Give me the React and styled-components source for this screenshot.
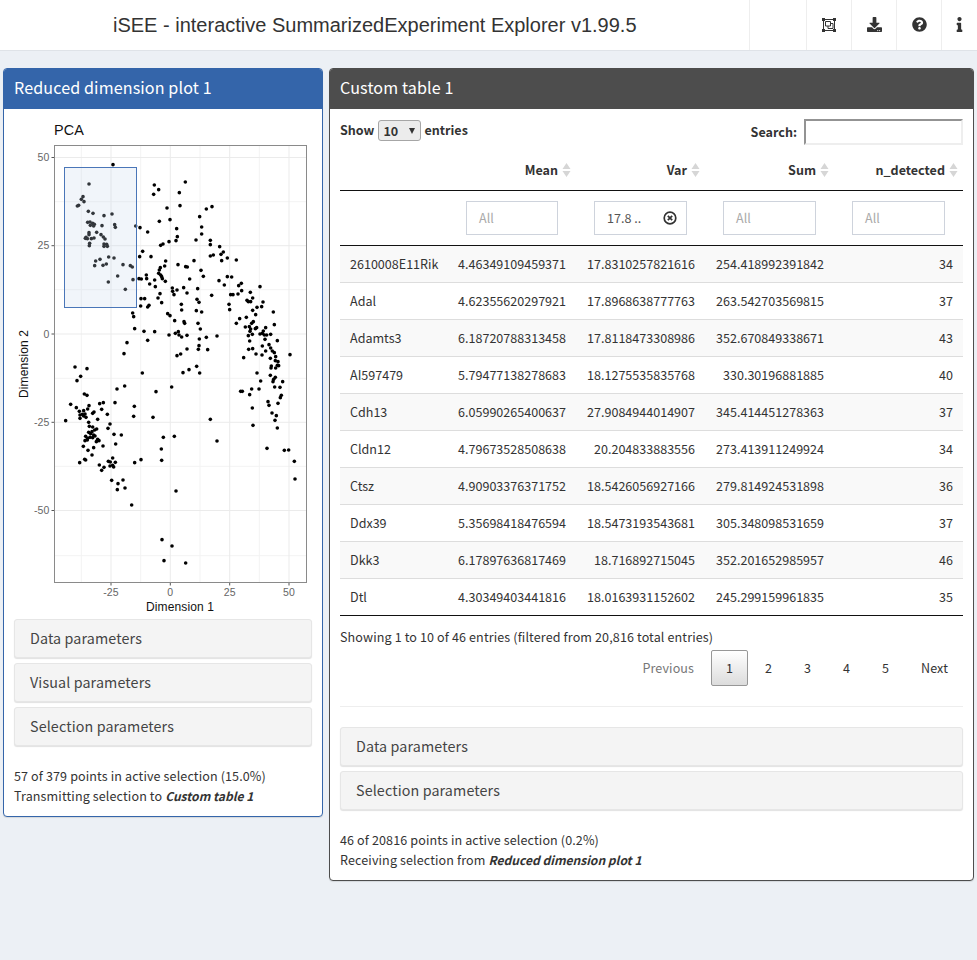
import React from 'react'
import styled, { createGlobalStyle } from 'styled-components'
import { FaDownload, FaQuestionCircle, FaInfo } from 'react-icons/fa'

const BODY_FONT = '"Noto Sans CJK SC", "Noto Sans", sans-serif'
const PLOT_FONT = '"Liberation Sans", Arial, sans-serif'

const GlobalStyle = createGlobalStyle`
  html, body { margin: 0; padding: 0; background: #ecf0f5; }
  body { font-family: ${BODY_FONT}; font-size: 12.55px; line-height: 20px; letter-spacing: 0.12px; color: #333; }
  * { box-sizing: border-box; }
`

const Page = styled.div`
  min-height: 960px;
  background: #ecf0f5;
`

const Navbar = styled.header`
  display: flex;
  align-items: stretch;
  height: 51px;
  background: #fff;
  border-bottom: 1px solid #dfe3e8;
`

const Brand = styled.div`
  flex: 1;
  padding-left: 113px;
  font-family: ${PLOT_FONT};
  font-size: 20px;
  line-height: 50px;
  letter-spacing: 0;
  color: #333;
`

const NavItem = styled.div`
  display: flex;
  align-items: center;
  justify-content: center;
  width: ${p => p.$w}px;
  padding-bottom: 1px;
  border-left: 1px solid #eee;
  color: #333;
  font-size: 15px;
`

const Columns = styled.main`
  display: grid;
  grid-template-columns: 320px 645px;
  gap: 6px;
  align-items: start;
  padding: 17px 3px 0;
`

const Panel = styled.section`
  background: #fff;
  border: 1px solid ${p => p.$color};
  border-radius: 4px;
  overflow: hidden;
  box-shadow: 0 1px 1px rgba(0, 0, 0, 0.1);
`

const PanelTitle = styled.h3`
  margin: -1px -1px 0;
  height: 41px;
  padding-left: 11px;
  background: ${p => p.$color};
  color: #fff;
  font-size: 16.1px;
  font-weight: 400;
  line-height: 38px;
`

const PlotBody = styled.div`
  padding: 1px 10px 10px;
`

const TableBody = styled.div`
  padding: 0 10px 10px;
`

const PlotSvg = styled.svg`
  display: block;
  margin-bottom: 4px;
`

const Collapse = styled.div`
  height: 39px;
  margin-bottom: 5px;
  padding-left: 15px;
  background: #f4f4f4;
  border: 1px solid #e6e6e6;
  border-radius: 3px;
  box-shadow: 0 1px 1px rgba(0, 0, 0, 0.12);
  font-size: 14.3px;
  line-height: 35px;
  color: #444;
`

const Status = styled.div`
  margin-top: 20px;
  b { font-size: 12.05px; font-style: italic; font-weight: 700; letter-spacing: 0; }
`

const TableTop = styled.div`
  display: flex;
  justify-content: space-between;
  align-items: flex-start;
  height: 36px;
  padding-top: 10px;
  letter-spacing: 0;
`

const ShowLabel = styled.label`
  display: flex;
  align-items: center;
  gap: 3px;
  height: 22px;
  font-weight: 700;
`

const SelectWrap = styled.span`
  position: relative;
  display: block;
  width: 43px;
  height: 21px;
  margin-left: 1px;
  &::after {
    content: '';
    position: absolute;
    right: 6px;
    top: 8px;
    border-style: solid;
    border-width: 6px 3.5px 0;
    border-color: #333 transparent transparent;
    pointer-events: none;
  }
`

const LengthSelect = styled.select`
  appearance: none;
  display: block;
  width: 100%;
  height: 100%;
  padding: 0 0 0 4px;
  font-family: ${BODY_FONT};
  font-size: 12.55px;
  font-weight: 700;
  color: #333;
  background: #ececec;
  border: 1px solid #a6a6a6;
  border-radius: 3px;
`

const SearchLabel = styled.label`
  display: flex;
  align-items: center;
  gap: 7px;
  height: 26px;
  font-weight: 700;
`

const SearchInput = styled.input`
  width: 159px;
  height: 26px;
  padding: 1px 2px;
  background: #fff;
  border-style: solid;
  border-width: 2px;
  border-color: #939393 #eee #eee #939393;
`

const Table = styled.table`
  width: 623px;
  margin-top: 10px;
  table-layout: fixed;
  border-collapse: separate;
  border-spacing: 0;
  letter-spacing: 0;
`

const HeadCell = styled.th`
  position: relative;
  height: 36px;
  padding: 0 18px 6px 10px;
  text-align: right;
  font-weight: 700;
  border-bottom: 1px solid #111;
`

const SortIcon = styled.svg`
  position: absolute;
  right: 5px;
  top: 7px;
`

const FilterCell = styled.td`
  height: 55px;
  padding: 0 18px;
  border-bottom: 1px solid #111;
`

const FilterBox = styled.div`
  display: flex;
  align-items: center;
  justify-content: space-between;
  height: 34px;
  padding: 0 9px 0 12px;
  background: #fff;
  border: 1px solid #ced3dc;
  color: ${p => (p.$filled ? '#555' : '#aaa')};
`

const Row = styled.tr`
  background: ${p => (p.$odd ? '#f9f9f9' : '#fff')};
`

const Cell = styled.td`
  height: 37px;
  padding: 0 10px;
  text-align: ${p => (p.$left ? 'left' : 'right')};
  white-space: nowrap;
  border-bottom: 1px solid ${p => (p.$last ? '#111' : '#ddd')};
`

const Info = styled.div`
  padding-top: 11px;
`

const Pager = styled.nav`
  display: flex;
  justify-content: flex-end;
  gap: 2px;
  margin-top: 3px;
`

const PageButton = styled.span`
  height: 36px;
  padding: 7px 14px;
  border: 1px solid ${p => (p.$current ? '#979797' : 'transparent')};
  border-radius: 2px;
  letter-spacing: ${p => (p.$digit ? 0 : '0.12px')};
  color: ${p => (p.$muted ? '#777' : '#333')};
  background: ${p => (p.$current ? 'linear-gradient(to bottom, #fff 0%, #dcdcdc 100%)' : 'none')};
`

const Rule = styled.hr`
  height: 1px;
  margin: 20px 0;
  background: #eee;
  border: 0;
`

/* positions read off the reference: top half then bottom half, in 3x crop px */
const upper = [[339,314],[267,372],[249,410],[244,418],[252,425],[236,436],[232,438],[265,454],[279,460],[312,467],[336,462],[344,494],[346,502],[263,487],[270,486],[278,490],[283,493],[271,496],[281,498],[306,497],[407,498],[420,503],[443,516],[290,517],[303,524],[310,531],[315,537],[267,518],[267,524],[258,532],[256,535],[262,536],[274,536],[282,534],[269,550],[268,557],[312,552],[320,553],[312,559],[322,559],[326,591],[342,594],[300,598],[287,603],[284,617],[309,616],[319,612],[369,614],[391,617],[397,621],[353,648],[399,659],[325,666],[376,688],[463,375],[476,389],[461,403],[556,366],[538,398],[540,437],[636,440],[619,447],[501,444],[599,470],[510,479],[478,484],[605,501],[530,506],[605,522],[532,530],[528,542],[507,545],[588,540],[631,541],[631,554],[659,560],[670,576],[663,583],[640,585],[631,588],[665,602],[682,594],[709,600],[489,552],[482,556],[428,574],[419,590],[453,590],[497,603],[582,602],[534,614],[557,620],[562,621],[494,618],[481,623],[478,630],[603,631],[610,649],[476,640],[482,645],[485,650],[487,656],[439,645],[417,656],[424,657],[440,656],[464,660],[569,657],[657,662],[682,650],[695,651],[496,664],[449,672],[466,680],[673,675],[724,670],[716,677],[517,684],[531,690],[518,694],[551,683],[593,686],[751,697],[780,680],[480,701],[522,704],[561,699],[635,706],[692,704],[699,704],[714,702],[725,692],[474,714],[423,716],[434,716],[485,728],[591,718],[597,727],[758,714],[741,721],[745,725],[752,725],[789,726],[544,733],[447,736],[443,741],[422,738],[687,733],[785,740],[771,742],[545,750],[689,749],[758,751],[589,752],[605,756],[820,756],[398,759],[401,770],[503,761],[510,767],[767,764],[719,776],[739,772],[524,782],[552,785],[554,790],[594,790],[709,790],[755,790],[760,785],[748,800],[736,801],[404,806],[601,807],[752,807],[766,806],[770,803],[797,803],[823,794]]
const lower = [[432,4],[464,5],[526,10],[535,5],[537,15],[545,21],[507,15],[561,16],[619,22],[651,18],[598,27],[443,31],[381,38],[372,71],[561,57],[597,47],[595,58],[623,59],[542,72],[531,77],[590,109],[567,119],[549,128],[599,129],[427,129],[750,4],[745,17],[757,13],[780,12],[790,3],[787,10],[793,15],[800,15],[812,13],[795,28],[749,33],[832,32],[787,48],[807,44],[812,54],[746,58],[758,56],[817,63],[797,63],[768,72],[786,75],[823,68],[827,80],[811,85],[870,74],[731,83],[826,92],[834,95],[814,108],[832,106],[836,107],[813,114],[827,114],[771,129],[811,136],[826,142],[821,148],[782,153],[819,155],[848,155],[824,171],[840,172],[755,177],[777,177],[722,184],[727,184],[749,194],[844,196],[841,203],[804,215],[834,220],[807,226],[757,234],[816,249],[829,257],[825,271],[759,286],[832,294],[801,355],[853,361],[866,360],[883,394],[885,447],[515,171],[468,185],[374,168],[351,177],[345,218],[403,229],[401,259],[459,262],[631,268],[523,319],[490,322],[651,333],[484,357],[485,391],[423,389],[404,398],[528,483],[395,525],[486,629],[516,648],[492,692],[557,699],[225,111],[261,116],[242,139],[231,152],[253,192],[261,196],[212,223],[229,233],[238,244],[251,242],[263,237],[267,227],[299,221],[310,218],[305,238],[282,246],[278,250],[240,255],[240,265],[247,253],[255,252],[251,258],[258,262],[197,272],[293,268],[322,253],[266,277],[330,282],[268,289],[278,291],[290,297],[284,300],[324,295],[266,307],[276,305],[272,311],[281,315],[257,319],[285,318],[263,325],[270,322],[278,323],[342,313],[364,315],[255,332],[262,330],[293,328],[297,332],[289,335],[250,349],[347,342],[309,348],[281,353],[264,361],[276,375],[254,388],[257,390],[239,398],[338,384],[325,394],[331,396],[346,397],[330,408],[338,406],[341,411],[298,405],[312,412],[305,421],[335,451],[369,450],[354,461],[375,474],[352,479]]

const points = [
  ...upper.map(([x, y]) => [x / 3, y / 3 + 60]),
  ...lower.map(([x, y]) => [x / 3, y / 3 + 330])
]

const xMajor = [[111, '-25'], [170.3, '0'], [229.7, '25'], [289, '50']]
const xMinor = [81.3, 140.7, 200, 259.3]
const yMajor = [[157.5, '50'], [245.7, '25'], [334, '0'], [422.3, '-25'], [510.5, '-50']]
const yMinor = [201.7, 289.7, 378.3, 466.3, 555.7]

const ScatterPlot = () => (
  <PlotSvg width="298" height="505" viewBox="14 110 298 505" fontFamily={PLOT_FONT}>
    <text x="54" y="135" fontSize="14.4" fill="#111">PCA</text>
    <rect x="54.5" y="145.5" width="252" height="437" fill="#fff" />
    {xMinor.map(x => <line key={x} x1={x} x2={x} y1="146" y2="582" stroke="#f3f3f3" />)}
    {yMinor.map(y => <line key={y} y1={y} y2={y} x1="55" x2="306" stroke="#f3f3f3" />)}
    {xMajor.map(([x]) => <line key={x} x1={x} x2={x} y1="146" y2="582" stroke="#ebebeb" />)}
    {yMajor.map(([y]) => <line key={y} y1={y} y2={y} x1="55" x2="306" stroke="#ebebeb" />)}
    {points.map(([x, y], i) => <circle key={i} cx={x} cy={y} r="1.8" fill="#000" />)}
    <rect x="64.5" y="167.5" width="72" height="140" fill="#c8d9ea" fillOpacity="0.25" stroke="#4a76b8" strokeWidth="1" />
    <rect x="54.5" y="145.5" width="252" height="437" fill="none" stroke="#8a8a8a" />
    {yMajor.map(([y, label]) => (
      <g key={label}>
        <line x1="51.5" x2="54" y1={y} y2={y} stroke="#555" />
        <text x="49.5" y={y + 3.7} fontSize="10.5" textAnchor="end" fill="#666">{label}</text>
      </g>
    ))}
    {xMajor.map(([x, label]) => (
      <g key={label}>
        <line x1={x} x2={x} y1="583" y2="585.5" stroke="#555" />
        <text x={x} y="596" fontSize="10.5" textAnchor="middle" fill="#666">{label}</text>
      </g>
    ))}
    <text x="180" y="611" fontSize="12" textAnchor="middle" fill="#111">Dimension 1</text>
    <text transform="translate(28 364) rotate(-90)" x="0" y="0" fontSize="12" textAnchor="middle" fill="#111">Dimension 2</text>
  </PlotSvg>
)

const rows = [
  ['2610008E11Rik', '4.46349109459371', '17.8310257821616', '254.418992391842', '34'],
  ['Adal', '4.62355620297921', '17.8968638777763', '263.542703569815', '37'],
  ['Adamts3', '6.18720788313458', '17.8118473308986', '352.670849338671', '43'],
  ['AI597479', '5.79477138278683', '18.1275535835768', '330.30196881885', '40'],
  ['Cdh13', '6.05990265400637', '27.9084944014907', '345.414451278363', '37'],
  ['Cldn12', '4.79673528508638', '20.204833883556', '273.413911249924', '34'],
  ['Ctsz', '4.90903376371752', '18.5426056927166', '279.814924531898', '36'],
  ['Ddx39', '5.35698418476594', '18.5473193543681', '305.348098531659', '37'],
  ['Dkk3', '6.17897636817469', '18.716892715045', '352.201652985957', '46'],
  ['Dtl', '4.30349403441816', '18.0163931152602', '245.299159961835', '35']
]

const columns = ['Mean', 'Var', 'Sum', 'n_detected']
const widths = [108, 128, 129, 129, 129]

const SortArrows = () => (
  <SortIcon width="9" height="16" viewBox="0 0 9 16">
    <path d="M4.5 1 L8.5 7 H0.5 Z M4.5 15 L0.5 9 H8.5 Z" fill="#d6d6d6" />
  </SortIcon>
)

const ClearIcon = () => (
  <svg width="14" height="14" viewBox="0 0 14 14">
    <circle cx="7" cy="7" r="5.8" fill="none" stroke="#333" strokeWidth="1.7" />
    <path d="M4.8 4.8 L9.2 9.2 M9.2 4.8 L4.8 9.2" stroke="#333" strokeWidth="1.7" />
  </svg>
)

const UngroupIcon = () => (
  <svg width="14" height="14" viewBox="0 0 14 14" fill="none" stroke="#333">
    <rect x="1.5" y="1.5" width="11" height="11" strokeWidth="1" />
    <path d="M0 0h3v3H0zM11 0h3v3h-3zM0 11h3v3H0zM11 11h3v3h-3z" fill="#333" stroke="none" />
    <path d="M3.5 3.5h5v4.5h-5z M6 8v2.5h5v-5h-2.5" strokeWidth="1" />
  </svg>
)

const App = () => (
  <Page>
    <GlobalStyle />
    <Navbar>
      <Brand>iSEE - interactive SummarizedExperiment Explorer v1.99.5</Brand>
      <NavItem $w={57} />
      <NavItem $w={45}><UngroupIcon /></NavItem>
      <NavItem $w={45}><FaDownload /></NavItem>
      <NavItem $w={45}><FaQuestionCircle /></NavItem>
      <NavItem $w={36}><FaInfo /></NavItem>
    </Navbar>
    <Columns>
      <Panel $color="#3465aa">
        <PanelTitle $color="#3465aa">Reduced dimension plot 1</PanelTitle>
        <PlotBody>
          <ScatterPlot />
          <Collapse>Data parameters</Collapse>
          <Collapse>Visual parameters</Collapse>
          <Collapse>Selection parameters</Collapse>
          <Status>
            57 of 379 points in active selection (15.0%)<br />
            Transmitting selection to <b>Custom table 1</b>
          </Status>
        </PlotBody>
      </Panel>
      <Panel $color="#4d4d4d">
        <PanelTitle $color="#4d4d4d">Custom table 1</PanelTitle>
        <TableBody>
          <TableTop>
            <ShowLabel>
              Show
              <SelectWrap>
                <LengthSelect defaultValue="10">
                  <option value="10">10</option>
                  <option value="25">25</option>
                </LengthSelect>
              </SelectWrap>
              entries
            </ShowLabel>
            <SearchLabel>
              Search:
              <SearchInput type="search" />
            </SearchLabel>
          </TableTop>
          <Table>
            <colgroup>
              {widths.map((w, i) => <col key={i} width={w} />)}
            </colgroup>
            <thead>
              <tr>
                <HeadCell />
                {columns.map(c => (
                  <HeadCell key={c}>{c}<SortArrows /></HeadCell>
                ))}
              </tr>
              <tr>
                <FilterCell />
                <FilterCell><FilterBox>All</FilterBox></FilterCell>
                <FilterCell><FilterBox $filled>17.8 ..<ClearIcon /></FilterBox></FilterCell>
                <FilterCell><FilterBox>All</FilterBox></FilterCell>
                <FilterCell><FilterBox>All</FilterBox></FilterCell>
              </tr>
            </thead>
            <tbody>
              {rows.map((row, r) => (
                <Row key={row[0]} $odd={r % 2 === 0}>
                  {row.map((value, c) => (
                    <Cell key={c} $left={c === 0} $last={r === rows.length - 1}>{value}</Cell>
                  ))}
                </Row>
              ))}
            </tbody>
          </Table>
          <Info>Showing 1 to 10 of 46 entries (filtered from 20,816 total entries)</Info>
          <Pager>
            <PageButton $muted>Previous</PageButton>
            <PageButton $current $digit>1</PageButton>
            <PageButton $digit>2</PageButton>
            <PageButton $digit>3</PageButton>
            <PageButton $digit>4</PageButton>
            <PageButton $digit>5</PageButton>
            <PageButton>Next</PageButton>
          </Pager>
          <Rule />
          <Collapse>Data parameters</Collapse>
          <Collapse>Selection parameters</Collapse>
          <Status>
            46 of 20816 points in active selection (0.2%)<br />
            Receiving selection from <b>Reduced dimension plot 1</b>
          </Status>
        </TableBody>
      </Panel>
    </Columns>
  </Page>
)

export default App
